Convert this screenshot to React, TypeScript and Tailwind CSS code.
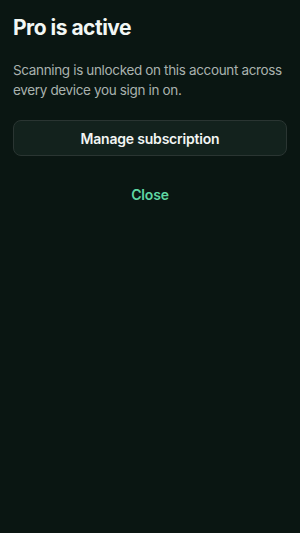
import React from "react";

export default function App() {
  return (
    <div
      className="min-h-[533px] w-full bg-[#0a1612] px-[13px] pt-[14px] text-white"
      style={{ fontFamily: "Inter, 'Noto Sans', sans-serif" }}
    >
      <h1 className="text-[21px] font-bold leading-[28px] tracking-[-0.5px] text-[#f2f7f4]">
        Pro is active
      </h1>
      <p className="mt-[18px] text-[13.5px] leading-[20px] tracking-[-0.35px] text-[#a9b2ae]">
        Scanning is unlocked on this account across every device you sign in on.
      </p>
      <button className="mt-[20px] flex h-[36px] w-full items-center justify-center rounded-[8px] border border-[#2a3532] bg-[#13221d] text-[14px] font-semibold tracking-[-0.2px] text-[#f2f5f3]">
        Manage subscription
      </button>
      <div className="mt-[28px] flex justify-center">
        <button className="text-[14px] font-semibold tracking-[-0.2px] text-[#5fd6a2]">Close</button>
      </div>
    </div>
  );
}
